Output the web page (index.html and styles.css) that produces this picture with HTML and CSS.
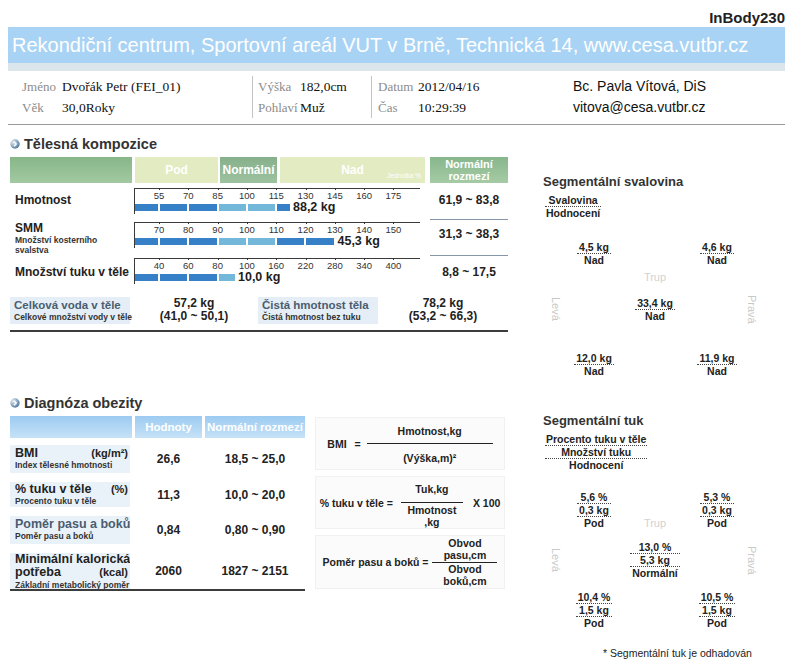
FILE: index.html
```html
<!DOCTYPE html>
<html lang="cs">
<head>
<meta charset="utf-8">
<title>InBody230</title>
<link rel="stylesheet" href="styles.css">
</head>
<body>
<div class="page">
  <div class="model">InBody230</div>
  <div class="banner">Rekondiční centrum, Sportovní areál VUT v Brně, Technická 14, www.cesa.vutbr.cz</div>
  <div class="strip"></div>
  <div class="info">
    <div class="info-col c1">
      <div class="il"><span class="lbl">Jméno</span><span class="val">Dvořák Petr (FEI_01)</span></div>
      <div class="il"><span class="lbl">Věk</span><span class="val">30,0Roky</span></div>
    </div>
    <div class="info-col c2">
      <div class="il"><span class="lbl">Výška</span><span class="val">182,0cm</span></div>
      <div class="il"><span class="lbl">Pohlaví</span><span class="val">Muž</span></div>
    </div>
    <div class="info-col c3">
      <div class="il"><span class="lbl">Datum</span><span class="val">2012/04/16</span></div>
      <div class="il"><span class="lbl">Čas</span><span class="val">10:29:39</span></div>
    </div>
    <div class="info-col c4">
      <div class="il">Bc. Pavla Vítová, DiS</div>
      <div class="il">vitova@cesa.vutbr.cz</div>
    </div>
  </div>

  <div class="main">
    <div class="left">
      <section class="comp">
        <h2 class="sec-title"><svg class="ico" width="10" height="10" viewBox="0 0 10 10"><defs><radialGradient id="gi1" cx="30%" cy="30%" r="75%"><stop offset="0" stop-color="#e3ebf2"/><stop offset="1" stop-color="#557ba0"/></radialGradient></defs><circle cx="5" cy="5" r="4.7" fill="url(#gi1)"/><path d="M4 2.8 L6.2 5 L4 7.2" fill="none" stroke="#fff" stroke-width="1.4"/></svg>Tělesná kompozice</h2>
        <div class="chead">
          <div class="ch ch-left"></div>
          <div class="ch ch-pod">Pod</div>
          <div class="ch ch-norm">Normální</div>
          <div class="ch-nad"><span class="nad-t">Nad</span><span class="unit">Jednotka %</span></div>
          <div class="ch ch-range">Normální<br>rozmezí</div>
        </div>

        <div class="crow crow-1">
          <div class="clabel">Hmotnost</div>
          <div class="scale">
            <div class="ticks"><span>55</span><span>70</span><span>85</span><span>100</span><span>115</span><span>130</span><span>145</span><span>160</span><span>175</span></div>
            <div class="bar"><i class="seg" style="width:23px"></i><i class="seg" style="width:27.3px"></i><i class="seg" style="width:27.3px"></i><i class="seg l" style="width:27.3px"></i><i class="seg l" style="width:27.3px"></i><i class="seg" style="width:12.8px"></i><b class="bval">88,2 kg</b></div>
          </div>
          <div class="crange">61,9 ~ 83,8</div>
        </div>

        <div class="crow crow-2">
          <div class="clabel multi"><div class="t">SMM</div><div class="s">Množství kosterního<br>svalstva</div></div>
          <div class="scale">
            <div class="ticks"><span>70</span><span>80</span><span>90</span><span>100</span><span>110</span><span>120</span><span>130</span><span>140</span><span>150</span></div>
            <div class="bar"><i class="seg" style="width:23px"></i><i class="seg" style="width:27.3px"></i><i class="seg" style="width:27.3px"></i><i class="seg l" style="width:27.3px"></i><i class="seg l" style="width:27.3px"></i><i class="seg" style="width:27.3px"></i><i class="seg" style="width:28px"></i><b class="bval">45,3 kg</b></div>
          </div>
          <div class="crange">31,3 ~ 38,3</div>
        </div>

        <div class="crow crow-3">
          <div class="clabel fat">Množství tuku v těle</div>
          <div class="scale">
            <div class="ticks"><span>40</span><span>60</span><span>80</span><span>100</span><span>160</span><span>220</span><span>280</span><span>340</span><span>400</span></div>
            <div class="bar"><i class="seg" style="width:23px"></i><i class="seg" style="width:27.3px"></i><i class="seg" style="width:27.3px"></i><i class="seg l" style="width:16.4px"></i><b class="bval">10,0 kg</b></div>
          </div>
          <div class="crange last">8,8 ~ 17,5</div>
        </div>

        <div class="water">
          <div class="wlabel"><div class="t">Celková voda v těle</div><div class="s">Celkové množství vody v těle</div></div>
          <div class="wval"><div>57,2 kg</div><div>(41,0 ~ 50,1)</div></div>
          <div class="wlabel"><div class="t">Čistá hmotnost těla</div><div class="s">Čistá hmotnost bez tuku</div></div>
          <div class="wval"><div>78,2 kg</div><div>(53,2 ~ 66,3)</div></div>
        </div>
      </section>

      <section class="obes">
        <h2 class="sec-title"><svg class="ico" width="10" height="10" viewBox="0 0 10 10"><defs><radialGradient id="gi2" cx="30%" cy="30%" r="75%"><stop offset="0" stop-color="#e3ebf2"/><stop offset="1" stop-color="#557ba0"/></radialGradient></defs><circle cx="5" cy="5" r="4.7" fill="url(#gi2)"/><path d="M4 2.8 L6.2 5 L4 7.2" fill="none" stroke="#fff" stroke-width="1.4"/></svg>Diagnóza obezity</h2>
        <div class="obes-body">
          <div class="otable">
            <div class="ohead">
              <div class="oh oh-left"></div>
              <div class="oh oh-val">Hodnoty</div>
              <div class="oh oh-range">Normální rozmezí</div>
            </div>
            <div class="orows">
              <div class="orow r1">
                <div class="olabel"><div class="ot"><span>BMI</span><span class="ou">(kg/m²)</span></div><div class="os">Index tělesné hmotnosti</div></div>
                <div class="oval">26,6</div>
                <div class="orng">18,5 ~ 25,0</div>
              </div>
              <div class="orow r2">
                <div class="olabel"><div class="ot"><span>% tuku v těle</span><span class="ou">(%)</span></div><div class="os">Procento tuku v těle</div></div>
                <div class="oval">11,3</div>
                <div class="orng">10,0 ~ 20,0</div>
              </div>
              <div class="orow r3">
                <div class="olabel"><div class="ot grey"><span>Poměr pasu a boků</span></div><div class="os">Poměr pasu a boků</div></div>
                <div class="oval">0,84</div>
                <div class="orng">0,80 ~ 0,90</div>
              </div>
              <div class="orow r4">
                <div class="olabel"><div class="ot"><span>Minimální kalorická</span></div><div class="ot"><span>potřeba</span><span class="ou">(kcal)</span></div><div class="os">Základní metabolický poměr</div></div>
                <div class="oval">2060</div>
                <div class="orng">1827 ~ 2151</div>
              </div>
            </div>
          </div>

          <div class="formulas">
            <div class="fbox">
              <span class="flbl">BMI</span><span class="feq">=</span>
              <span class="frac f1"><span class="num">Hmotnost,kg</span><span class="fline"></span><span class="den">(Výška,m)²</span></span>
            </div>
            <div class="fbox">
              <span class="flbl gap8">% tuku v těle =</span>
              <span class="frac f2"><span class="num">Tuk,kg</span><span class="fline"></span><span class="den">Hmotnost<br>,kg</span></span>
              <span class="fx">X 100</span>
            </div>
            <div class="fbox">
              <span class="flbl gap4">Poměr pasu a boků =</span>
              <span class="frac f3"><span class="num">Obvod<br>pasu,cm</span><span class="fline"></span><span class="den">Obvod<br>boků,cm</span></span>
            </div>
          </div>
        </div>
      </section>
    </div>

    <div class="right">
      <section class="seg-sec muscle">
        <h3 class="seg-title">Segmentální svalovina</h3>
        <div class="legend"><span>Svalovina</span><span>Hodnocení</span></div>
        <div class="diag diag-m">
          <div class="side left-side">Levá</div>
          <div class="item la"><span>4,5 kg</span><span>Nad</span></div>
          <div class="item ra"><span>4,6 kg</span><span>Nad</span></div>
          <div class="trup">Trup</div>
          <div class="item tr"><span>33,4 kg</span><span>Nad</span></div>
          <div class="item ll"><span>12,0 kg</span><span>Nad</span></div>
          <div class="item rl"><span>11,9 kg</span><span>Nad</span></div>
          <div class="side right-side">Pravá</div>
        </div>
      </section>

      <section class="seg-sec fat">
        <h3 class="seg-title">Segmentální tuk</h3>
        <div class="legend"><span>Procento tuku v těle</span><span>Množství tuku</span><span>Hodnocení</span></div>
        <div class="diag diag-f">
          <div class="side left-side">Levá</div>
          <div class="item la"><span>5,6 %</span><span>0,3 kg</span><span>Pod</span></div>
          <div class="item ra"><span>5,3 %</span><span>0,3 kg</span><span>Pod</span></div>
          <div class="trup">Trup</div>
          <div class="item tr"><span>13,0 %</span><span>5,3 kg</span><span>Normální</span></div>
          <div class="item ll"><span>10,4 %</span><span>1,5 kg</span><span>Pod</span></div>
          <div class="item rl"><span>10,5 %</span><span>1,5 kg</span><span>Pod</span></div>
          <div class="side right-side">Pravá</div>
        </div>
        <p class="note">* Segmentální tuk je odhadován</p>
      </section>
    </div>
  </div>
</div>
</body>
</html>
```

FILE: styles.css
```css
* { box-sizing: border-box; }
html, body { margin: 0; padding: 0; background: #fff; }
body { font-family: "Liberation Sans", Arial, sans-serif; color: #222; }
h2, h3, p { margin: 0; }

.page { width: 801px; height: 662px; overflow: hidden; }

.model {
  height: 27px; padding: 9px 16px 0 0; text-align: right;
  font-weight: bold; font-size: 15px; line-height: 17px; color: #222;
}
.banner {
  margin: 0 16px 0 8px; height: 36px; padding-left: 4px;
  background: #a8d3f4; color: #fff; font-size: 20px; line-height: 36px; white-space: nowrap;
}
.strip { margin: 0 16px 0 8px; height: 8px; background: #dbe5ec; }

.info {
  margin: 0 16px 0 8px; padding: 5px 0 6px 14px;
  border-bottom: 1px solid #9a9a9a;
  display: grid; grid-template-columns: 231px 119px 201px 1fr;
  font-family: "Liberation Serif", "Times New Roman", serif;
}
.info-col { line-height: 21px; font-size: 13.5px; }
.c1, .c2 { border-right: 1px solid #c4c4c4; }
.c2 { padding-left: 5px; }
.c3 { padding-left: 6px; }
.il { display: flex; white-space: nowrap; }
.lbl { color: #8c8c8c; font-size: 13px; }
.c1 .lbl { width: 40px; }
.c2 .lbl { width: 42px; }
.c3 .lbl { width: 40px; }
.val { color: #111; }
.c4 { font-family: "Liberation Sans", Arial, sans-serif; font-size: 14px; color: #111; }

.main { display: grid; grid-template-columns: 498px 1fr; column-gap: 35px; padding-left: 10px; }

.sec-title {
  display: flex; align-items: center; gap: 4px;
  font-size: 14.5px; font-weight: bold; color: #333; line-height: 18px;
}
.ico { flex: none; }
.comp .sec-title { margin-top: 10px; }

.chead { display: flex; height: 26px; margin-top: 4px; color: #fff; font-weight: bold; font-size: 12px; }
.ch { display: flex; align-items: center; justify-content: center; }
.ch-left { width: 122px; background: linear-gradient(#87b689, #a3c9a1); }
.ch-pod { width: 83px; margin-left: 3px; background: #e3ebc2; }
.ch-norm { width: 57px; margin-left: 2px; background: linear-gradient(#86b08b, #9dc29f); }
.ch-nad {
  width: 145px; margin-left: 3px; background: #e3ebc2;
  display: grid; grid-template-columns: 1fr; grid-template-rows: 1fr;
}
.nad-t, .unit { grid-area: 1 / 1; }
.nad-t { align-self: center; justify-self: center; }
.unit { align-self: end; justify-self: end; font-size: 6.5px; line-height: 8px; font-weight: normal; padding: 0 4px 3px 0; }
.ch-range {
  width: 78px; margin-left: 5px; background: linear-gradient(#87b68c, #a5cba5);
  text-align: center; font-size: 11px; line-height: 12.5px;
}

.crow { display: grid; grid-template-columns: 124px 286px 88px; }
.crow-1 { height: 34px; margin-top: 5px; }
.crow-2 { height: 36px; }
.crow-3 { height: 34px; }
.clabel { padding: 5px 0 0 5px; font-size: 12px; font-weight: bold; line-height: 14px; white-space: nowrap; }
.clabel.multi { padding-top: 0; }
.clabel.fat { padding-top: 7px; }
.clabel .t { line-height: 13px; }
.clabel .s { font-size: 8.5px; line-height: 10px; color: #333; }

.scale { height: 26px; border-top: 1px solid #3a3a3a; border-left: 1px solid #3a3a3a; }
.ticks { display: flex; padding-left: 9.4px; margin-top: 2px; height: 10px; }
.ticks span {
  width: 29.3px; flex: none; text-align: center; font-size: 9.5px; line-height: 10px; color: #333; position: relative;
}
.ticks span::before {
  content: ""; position: absolute; left: 50%; top: -3px; width: 1px; height: 2px; background: #333;
}
.bar { display: flex; align-items: center; gap: 2px; height: 12px; }
.seg { display: block; height: 7px; flex: none; background: #3580c6; }
.seg.l { background: #73b7da; }
.bval { font-size: 12.5px; font-weight: bold; line-height: 12px; margin-left: 1px; white-space: nowrap; color: #1d1d1d; }

.crange {
  margin-left: 10px; margin-bottom: 2px; padding-top: 5px;
  border-bottom: 1px solid #8596a8;
  text-align: center; font-weight: bold; font-size: 12px; line-height: 14px;
}
.crange.last { border-bottom: 0; padding-top: 7px; }

.water {
  margin-top: 5px; padding-bottom: 6px; border-bottom: 2px solid #3c3c3c;
  display: grid; grid-template-columns: 120px 128px 120px 130px;
}
.wlabel { height: 27px; padding: 1px 0 0 4px; background: #e5eef6; white-space: nowrap; }
.wlabel .t { font-size: 11.5px; font-weight: bold; color: #4a5d70; line-height: 14px; }
.wlabel .s { font-size: 8.5px; font-weight: bold; color: #333; line-height: 11px; }
.wval { text-align: center; font-weight: bold; font-size: 12px; line-height: 13px; }

.obes { margin-top: 62px; }
.obes-body { display: flex; gap: 10px; margin-top: 4px; }
.otable { width: 295px; }
.ohead { display: flex; height: 22px; color: #fff; font-weight: bold; font-size: 11.5px; }
.oh { display: flex; align-items: center; justify-content: center; background: linear-gradient(#9ccbf1, #c6e2f7); }
.oh-left { width: 122px; }
.oh-val { width: 67px; margin-left: 3px; }
.oh-range { width: 100px; margin-left: 3px; white-space: nowrap; }

.orows { display: grid; row-gap: 9px; margin-top: 7px; border-bottom: 2px solid #3c3c3c; }
.orow { display: grid; grid-template-columns: 122px 70px 103px; align-items: center; }
.orow.r1, .orow.r3 { height: 28px; }
.orow.r2 { height: 25px; }
.orow.r4 { height: 36px; }
.olabel {
  width: 120px; height: 100%; overflow: hidden; align-self: stretch;
  background: #eaf2f9; padding: 2px 2px 0 5px; white-space: nowrap;
}
.orow.r2 .olabel { padding-top: 1px; }
.orow.r4 .olabel { padding-top: 0; }
.ot { display: flex; justify-content: space-between; align-items: baseline; font-size: 12.5px; font-weight: bold; line-height: 13px; color: #222; }
.ot.grey { color: #4a5d70; }
.ou { font-size: 11px; }
.os { font-size: 8.5px; font-weight: bold; line-height: 10px; color: #333; }
.orow.r4 .os { line-height: 12px; }
.oval, .orng { text-align: center; font-weight: bold; font-size: 12px; }
.oval { padding-left: 3px; }
.orng { padding-left: 3px; }

.formulas { width: 190px; display: flex; flex-direction: column; gap: 6px; margin-top: 1px; }
.fbox {
  height: 53px; display: flex; align-items: center; justify-content: center;
  background: #fbfbfb; border: 1px solid #f1f1f1;
  font-size: 10.5px; font-weight: bold; color: #222; white-space: nowrap;
}
.fbox:last-child { height: 54px; }
.flbl { margin-right: 8px; }
.flbl.gap8 { margin-right: 8px; }
.flbl.gap4 { margin-right: 4px; }
.feq { margin-right: 6px; }
.frac { display: inline-flex; flex-direction: column; align-items: center; text-align: center; }
.frac .num, .frac .den { line-height: 12px; }
.fline { align-self: stretch; height: 0; border-top: 1.5px solid #222; }
.f1 { width: 126px; }
.f1 .num { padding: 2px 0 6px; }
.f1 .den { padding-top: 8px; }
.f2 { width: 62px; }
.f2 .num { padding: 6px 0 7px; }
.f2 .den { padding-top: 1px; }
.f3 { width: 65px; }
.f3 .num { padding-bottom: 1px; }
.fx { margin-left: 10px; }

.seg-title { font-size: 13px; font-weight: bold; line-height: 16px; color: #333; }
.muscle .seg-title { margin-top: 49px; }
.fat .seg-title { margin-top: 36px; }
.legend, .item {
  display: inline-grid; text-align: center; font-size: 10.5px; font-weight: bold; color: #222;
}
.legend { margin: 1px 0 0 2px; }
.legend span, .item span { line-height: 12px; padding: 0 2px; white-space: nowrap; border-bottom: 1px dotted #444; }
.legend span:last-child, .item span:last-child { border-bottom: 0; }
.legend span { padding: 0 1px; }

.diag { display: grid; grid-template-columns: 25px 52px 70px 54px 16px; justify-items: center; }
.diag-m { margin-top: 22px; grid-template-rows: 25px 17px 14px 25px 30px 25px; }
.diag-f { margin-top: 20px; grid-template-rows: 38px 12px 38px 12px 38px; }
.side { writing-mode: vertical-rl; font-size: 11px; color: #c9c9c9; align-self: center; grid-row: 1 / -1; }
.left-side { grid-column: 1; }
.right-side { grid-column: 5; }
.trup { font-size: 11px; line-height: 12px; color: #d2d2d2; grid-column: 3; align-self: end; }
.la { grid-column: 2; grid-row: 1; }
.ra { grid-column: 4; grid-row: 1; }
.diag-m .trup { grid-row: 2; }
.diag-f .trup { grid-row: 1; }
.diag-m .tr { grid-column: 3; grid-row: 4; }
.diag-m .ll { grid-column: 2; grid-row: 6; }
.diag-m .rl { grid-column: 4; grid-row: 6; }
.diag-f .tr { grid-column: 3; grid-row: 3; }
.diag-f .ll { grid-column: 2; grid-row: 5; }
.diag-f .rl { grid-column: 4; grid-row: 5; }

.note { margin: 18px 0 0 60px; font-size: 10.5px; line-height: 13px; color: #222; white-space: nowrap; }
```
